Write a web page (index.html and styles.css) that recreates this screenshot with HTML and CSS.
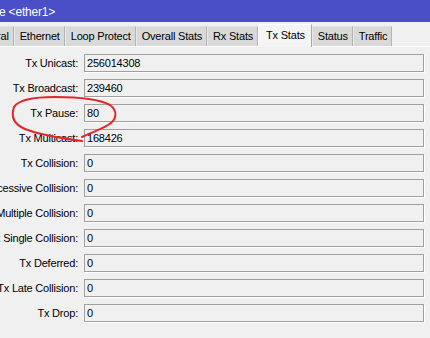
FILE: index.html
```html
<!DOCTYPE html>
<html>
<head>
<meta charset="utf-8">
<link rel="stylesheet" href="styles.css">
</head>
<body>
<div class="title">e &lt;ether1&gt;</div>
<div class="tabs">
  <div class="tab first">General</div>
  <div class="tab">Ethernet</div>
  <div class="tab">Loop Protect</div>
  <div class="tab">Overall Stats</div>
  <div class="tab">Rx Stats</div>
  <div class="tab active">Tx Stats</div>
  <div class="tab">Status</div>
  <div class="tab">Traffic</div>
</div>
<div class="panel">
  <div class="label"><span>Tx Unicast:</span></div><div class="box">256014308</div>
  <div class="label"><span>Tx Broadcast:</span></div><div class="box">239460</div>
  <div class="label"><span>Tx Pause:</span></div><div class="box">80</div>
  <div class="label"><span>Tx Multicast:</span></div><div class="box">168426</div>
  <div class="label"><span>Tx Collision:</span></div><div class="box">0</div>
  <div class="label"><span>Tx Excessive Collision:</span></div><div class="box">0</div>
  <div class="label"><span>Tx Multiple Collision:</span></div><div class="box">0</div>
  <div class="label"><span>Tx Single Collision:</span></div><div class="box">0</div>
  <div class="label"><span>Tx Deferred:</span></div><div class="box">0</div>
  <div class="label"><span>Tx Late Collision:</span></div><div class="box">0</div>
  <div class="label"><span>Tx Drop:</span></div><div class="box">0</div>
</div>
<svg class="mark" width="430" height="338" viewBox="0 0 430 338">
  <path d="M14,107 C19,99 38,97 55,97 C75,97 99,99 110,105 C118,111 117,120 108,125 C100,130 90,133 82,137" />
  <path d="M14,107 C11,116 13,124 25,129 C40,135 60,138 82,141" />
</svg>
</body>
</html>
```

FILE: styles.css
```css
html, body {
  margin: 0;
  padding: 0;
}
body {
  width: 430px;
  height: 338px;
  overflow: hidden;
  position: relative;
  background: #f0f0f0;
  font-family: "Liberation Sans", Arial, sans-serif;
  font-size: 11px;
  letter-spacing: -0.2px;
  color: #000;
}
.title {
  height: 22px;
  line-height: 24px;
  background: #4a4fc8;
  color: #fff;
  font-size: 12px;
  white-space: nowrap;
  margin-left: -1px;
}
.tabs {
  display: flex;
  align-items: flex-end;
  height: 24px;
  border-bottom: 1px solid #ffffff;
}
.tab {
  box-sizing: border-box;
  height: 20px;
  line-height: 19px;
  padding: 0 4px 0 5px;
  background: #d9d9d9;
  border-top: 1px solid #e2e2e2;
  border-left: 1px solid #e8e8e8;
  border-right: 1px solid #b4b4b4;
  white-space: nowrap;
}
.tab.first {
  margin-left: -35px;
}
.tab.active {
  height: 23px;
  line-height: 21px;
  padding: 0 6px 0 7px;
  background: #f4f4f4;
  border-top: 1px solid #ffffff;
  border-left: 1px solid #ffffff;
  border-right: 1px solid #a8a8a8;
  margin-bottom: -1px;
}
.panel {
  display: grid;
  grid-template-columns: 78px 1fr;
  column-gap: 6px;
  row-gap: 7px;
  padding: 7px 6px 0 0;
}
.label {
  display: flex;
  justify-content: flex-end;
  align-items: center;
  height: 18px;
  white-space: nowrap;
}
.box {
  box-sizing: border-box;
  height: 18px;
  line-height: 16px;
  padding-left: 2px;
  border: 1px solid #a0a0a0;
  box-shadow: 1px 1px 0 #ffffff;
  background: #f0f0f0;
}
.mark {
  position: absolute;
  left: 0;
  top: 0;
  pointer-events: none;
}
.mark path {
  fill: none;
  stroke: #e3262a;
  stroke-width: 2;
  stroke-linecap: round;
}
```
